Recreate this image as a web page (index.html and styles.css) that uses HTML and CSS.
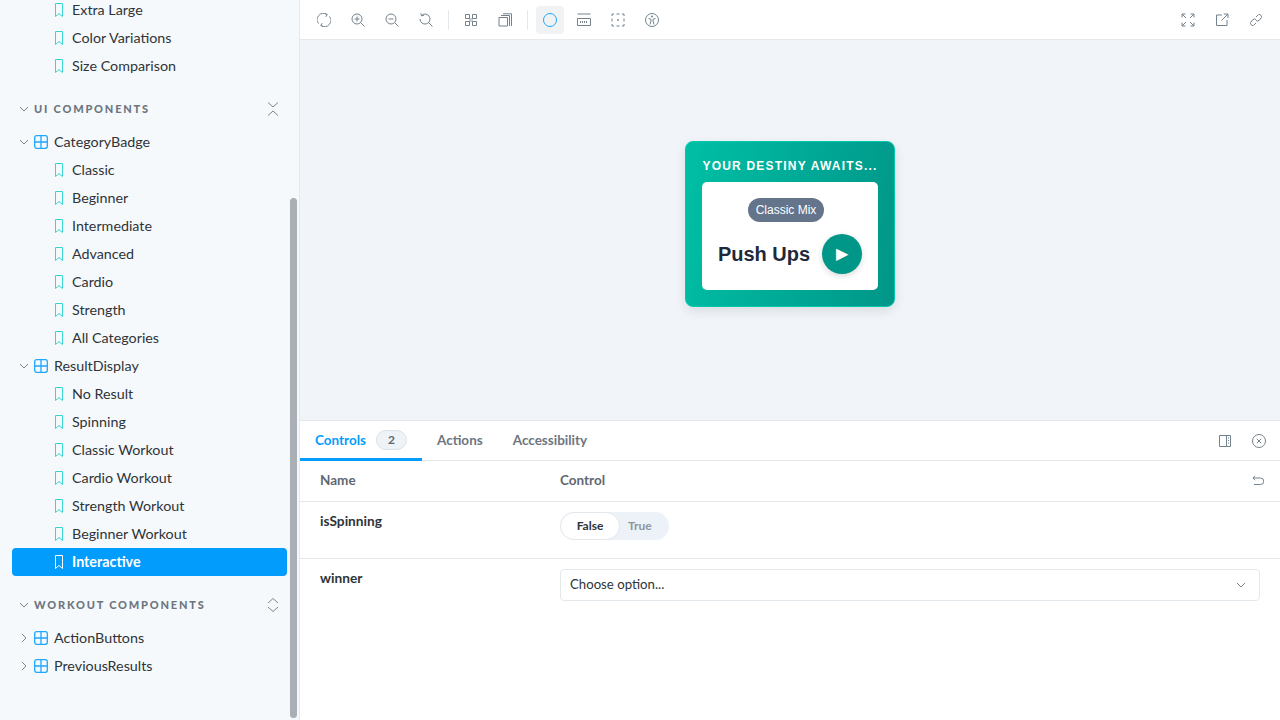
FILE: index.html
```html
<!DOCTYPE html>
<html lang="en">
<head>
  <meta charset="UTF-8" />
  <title>Storybook</title>
  <link rel="stylesheet" href="styles.css">
</head>
<body>
  <svg class="defs" width="0" height="0">
    <symbol id="bookmark" viewBox="0 0 14 14"><path d="M3.500 .5h7v13l-3.500-3-3.500 3z" fill="none" stroke="currentColor"/></symbol>
    <symbol id="grid" viewBox="0 0 14 14"><rect x=".7" y=".7" width="12.600" height="12.600" rx="2" fill="none" stroke="currentColor" stroke-width="1.300"/><path d="M7 1v12M1 7h12" stroke="currentColor" stroke-width="1.300"/></symbol>
    <symbol id="down" viewBox="0 0 10 10"><path d="M1 3l4 4 4-4" fill="none" stroke="currentColor"/></symbol>
    <symbol id="right" viewBox="0 0 10 10"><path d="M3 1l4 4-4 4" fill="none" stroke="currentColor"/></symbol>
    <symbol id="collapse" viewBox="0 0 14 14"><path d="M2 .5l5 4.500 5-4.500M2 13.500l5-4.500 5 4.500" fill="none" stroke="currentColor"/></symbol>
    <symbol id="expand" viewBox="0 0 14 14"><path d="M2 5l5-4.500 5 4.500M2 9l5 4.500 5-4.500" fill="none" stroke="currentColor"/></symbol>
  </svg>

  <div class="app">
    <aside class="sidebar">
      <div class="tree">
        <div class="row story"><svg class="ic-book"><use href="#bookmark"/></svg>Extra Large</div>
        <div class="row story"><svg class="ic-book"><use href="#bookmark"/></svg>Color Variations</div>
        <div class="row story"><svg class="ic-book"><use href="#bookmark"/></svg>Size Comparison</div>

        <div class="section">
          <svg class="ic-arrow"><use href="#down"/></svg>
          <span class="section-name">UI COMPONENTS</span>
          <svg class="ic-toggle"><use href="#collapse"/></svg>
        </div>
        <div class="row comp"><svg class="ic-arrow"><use href="#down"/></svg><svg class="ic-grid"><use href="#grid"/></svg>CategoryBadge</div>
        <div class="row story"><svg class="ic-book"><use href="#bookmark"/></svg>Classic</div>
        <div class="row story"><svg class="ic-book"><use href="#bookmark"/></svg>Beginner</div>
        <div class="row story"><svg class="ic-book"><use href="#bookmark"/></svg>Intermediate</div>
        <div class="row story"><svg class="ic-book"><use href="#bookmark"/></svg>Advanced</div>
        <div class="row story"><svg class="ic-book"><use href="#bookmark"/></svg>Cardio</div>
        <div class="row story"><svg class="ic-book"><use href="#bookmark"/></svg>Strength</div>
        <div class="row story"><svg class="ic-book"><use href="#bookmark"/></svg>All Categories</div>
        <div class="row comp"><svg class="ic-arrow"><use href="#down"/></svg><svg class="ic-grid"><use href="#grid"/></svg>ResultDisplay</div>
        <div class="row story"><svg class="ic-book"><use href="#bookmark"/></svg>No Result</div>
        <div class="row story"><svg class="ic-book"><use href="#bookmark"/></svg>Spinning</div>
        <div class="row story"><svg class="ic-book"><use href="#bookmark"/></svg>Classic Workout</div>
        <div class="row story"><svg class="ic-book"><use href="#bookmark"/></svg>Cardio Workout</div>
        <div class="row story"><svg class="ic-book"><use href="#bookmark"/></svg>Strength Workout</div>
        <div class="row story"><svg class="ic-book"><use href="#bookmark"/></svg>Beginner Workout</div>
        <div class="row story selected"><svg class="ic-book"><use href="#bookmark"/></svg>Interactive</div>

        <div class="section">
          <svg class="ic-arrow"><use href="#down"/></svg>
          <span class="section-name">WORKOUT COMPONENTS</span>
          <svg class="ic-toggle"><use href="#expand"/></svg>
        </div>
        <div class="row comp"><svg class="ic-arrow"><use href="#right"/></svg><svg class="ic-grid"><use href="#grid"/></svg>ActionButtons</div>
        <div class="row comp"><svg class="ic-arrow"><use href="#right"/></svg><svg class="ic-grid"><use href="#grid"/></svg>PreviousResults</div>
      </div>
      <div class="scrollbar"></div>
    </aside>

    <main class="main">
      <div class="toolbar">
        <div class="tool"><svg viewBox="0 0 14 14"><path d="M1.500 10.500A6.200 6.200 0 0 1 9.500 1.300M12.500 3.500A6.200 6.200 0 0 1 4.500 12.700M7.800 .3l2.500 1.200-1.500 2.300M6.200 13.700l-2.500-1.200 1.500-2.300" fill="none" stroke="currentColor"/></svg></div>
        <div class="tool"><svg viewBox="0 0 14 14"><circle cx="6" cy="6" r="5" fill="none" stroke="currentColor"/><path d="M9.500 9.500l4 4M3.500 6h5M6 3.500v5" fill="none" stroke="currentColor"/></svg></div>
        <div class="tool"><svg viewBox="0 0 14 14"><circle cx="6" cy="6" r="5" fill="none" stroke="currentColor"/><path d="M9.500 9.500l4 4M3.500 6h5" fill="none" stroke="currentColor"/></svg></div>
        <div class="tool"><svg viewBox="0 0 14 14"><path d="M2.500 2.500A5 5 0 1 1 1 6M9.500 9.500l4 4M1.800 .3l.7 2.500 2.500-.5" fill="none" stroke="currentColor"/></svg></div>
        <span class="divider"></span>
        <div class="tool"><svg viewBox="0 0 14 14"><path d="M1.500 1.500h4v4h-4zM8.500 1.500h4v4h-4zM1.500 8.500h4v4h-4zM8.500 8.500h4v4h-4z" fill="none" stroke="currentColor"/><rect x="5" y="5" width="4" height="4" fill="currentColor" opacity=".4"/></svg></div>
        <div class="tool"><svg viewBox="0 0 14 14"><path d="M1 4.500h8.500v8.500H1zM3 2.500h8.500v10.500M5 .8h8.500v12.200" fill="none" stroke="currentColor"/></svg></div>
        <span class="divider"></span>
        <div class="tool active"><svg viewBox="0 0 14 14"><circle cx="7" cy="7" r="6.500" fill="none" stroke="currentColor"/></svg></div>
        <div class="tool"><svg viewBox="0 0 14 14"><path d="M.5 1h13M.5 5.500h13v7H.5zM3.500 10V8M5.500 10V8M7.500 10V8M9.500 10V8" fill="none" stroke="currentColor"/></svg></div>
        <div class="tool"><svg viewBox="0 0 14 14"><path d="M1 3V1h2M5.500 1h3M11 1h2v2M13 5.500v3M13 11v2h-2M8.500 13h-3M3 13H1v-2M1 8.500v-3" fill="none" stroke="currentColor"/><circle cx="7" cy="7" r=".9" fill="currentColor"/></svg></div>
        <div class="tool"><svg viewBox="0 0 14 14"><circle cx="7" cy="7" r="6.500" fill="none" stroke="currentColor"/><circle cx="7" cy="3.500" r="1" fill="currentColor"/><path d="M3.500 5.500L6 6.300V8L5 11.500M10.500 5.500L8 6.300V8l1 3.500" fill="none" stroke="currentColor"/></svg></div>
        <div class="spacer"></div>
        <div class="tool"><svg viewBox="0 0 14 14"><path d="M1 1l4 4M13 1L9 5M1 13l4-4M13 13L9 9M1 4.500V1h3.500M9.500 1H13v3.500M1 9.500V13h3.500M9.500 13H13V9.500" fill="none" stroke="currentColor"/></svg></div>
        <div class="tool"><svg viewBox="0 0 14 14"><path d="M7 2H1.500v10.500H12V7M6.500 7.500L13 1M8.800 1H13v4.200" fill="none" stroke="currentColor"/></svg></div>
        <div class="tool"><svg viewBox="0 0 14 14"><path d="M7 4l2.500-2.500a2.500 2.500 0 0 1 3 3L10 7.500a2.500 2.500 0 0 1-3 0M7 10l-2.500 2.500a2.500 2.500 0 0 1-3-3L4 6.500a2.500 2.500 0 0 1 3 0" fill="none" stroke="currentColor"/></svg></div>
      </div>

      <div class="canvas">
        <div class="card">
          <h2 class="card-title">YOUR DESTINY AWAITS...</h2>
          <div class="card-body">
            <span class="badge">Classic Mix</span>
            <div class="result">
              <span class="exercise">Push Ups</span>
              <span class="play">▶</span>
            </div>
          </div>
        </div>
      </div>

      <section class="panel">
        <div class="tabs">
          <div class="tab current">Controls <span class="count">2</span></div>
          <div class="tab">Actions</div>
          <div class="tab">Accessibility</div>
          <div class="spacer"></div>
          <div class="tool small"><svg viewBox="0 0 14 14"><path d="M1.500 1.500h11v11h-11zM8.500 1.500v11" fill="none" stroke="currentColor"/><path d="M10.500 3.500v1M10.500 6v1M10.500 8.500v1" stroke="currentColor"/></svg></div>
          <div class="tool small"><svg viewBox="0 0 14 14"><circle cx="7" cy="7" r="6.500" fill="none" stroke="currentColor"/><path d="M4.800 4.800l4.400 4.400M9.200 4.800l-4.400 4.400" stroke="currentColor"/></svg></div>
        </div>

        <div class="args-head">
          <span class="col-name">Name</span>
          <span class="col-control">Control</span>
          <svg class="undo" viewBox="0 0 12 12"><path d="M1 3h7.500a3 3 0 0 1 0 6.500H2M3 .8L1 3l2 2.200" fill="none" stroke="currentColor"/></svg>
        </div>

        <div class="arg">
          <span class="col-name arg-name">isSpinning</span>
          <div class="switch"><span class="opt on">False</span><span class="opt">True</span></div>
        </div>

        <div class="arg last">
          <span class="col-name arg-name">winner</span>
          <div class="select">Choose option...
            <svg viewBox="0 0 10 10"><use href="#down"/></svg>
          </div>
        </div>
      </section>
    </main>
  </div>
</body>
</html>
```

FILE: styles.css
```css
* {
  margin: 0;
  padding: 0;
  box-sizing: border-box;
}

html, body {
  height: 100%;
  overflow: hidden;
}

body {
  font-family: Lato, "Noto Sans", sans-serif;
  font-size: 14px;
  color: #2e3438;
  background: #fff;
}

.defs {
  position: absolute;
}

.app {
  display: flex;
  height: 720px;
}

/* Sidebar */
.sidebar {
  position: relative;
  width: 300px;
  flex: none;
  background: #f6f9fc;
  border-right: 1px solid #e3e8ec;
  overflow: hidden;
}

.tree {
  margin-top: -4px;
  padding: 0 12px;
}

.row {
  display: flex;
  align-items: center;
  width: 275px;
  height: 28px;
  padding-bottom: 2px;
  font-size: 14.3px;
  color: #2e3438;
  border-radius: 4px;
}

.row svg {
  margin-top: 2px;
}

.row.story {
  padding-left: 40px;
}

.row.comp {
  padding-left: 7px;
}

.row.selected {
  background: #029cfd;
  color: #fff;
  font-weight: 700;
}

.ic-book {
  width: 14px;
  height: 14px;
  margin-right: 6px;
  color: #37d5d3;
}

.selected .ic-book {
  color: #fff;
}

.ic-grid {
  width: 14px;
  height: 14px;
  margin-right: 6px;
  color: #1ea7fd;
}

.ic-arrow {
  width: 10px;
  height: 10px;
  margin-right: 5px;
  color: #7d858c;
  flex: none;
}

.section {
  display: flex;
  align-items: center;
  height: 20px;
  margin-top: 19px;
  margin-bottom: 9px;
  padding-left: 7px;
  width: 275px;
}

.section-name {
  font-size: 11px;
  font-weight: 900;
  letter-spacing: 1.8px;
  color: #6d7680;
  flex: 1;
  margin-bottom: 2px;
}

.ic-toggle {
  width: 14px;
  height: 14px;
  color: #7d858c;
  margin-right: 7px;
}

.scrollbar {
  position: absolute;
  left: 290px;
  top: 198px;
  width: 7px;
  height: 520px;
  border-radius: 4px;
  background: #a9afb4;
}

/* Main */
.main {
  flex: 1;
  min-width: 0;
  display: flex;
  flex-direction: column;
}

.toolbar {
  display: flex;
  align-items: center;
  height: 40px;
  flex: none;
  padding: 0 10px;
  gap: 6px;
  border-bottom: 1px solid #e6e9ec;
  background: #fff;
}

.tool {
  width: 28px;
  height: 28px;
  display: flex;
  align-items: center;
  justify-content: center;
  color: #73828c;
  border-radius: 4px;
  flex: none;
}

.tool svg {
  width: 14px;
  height: 14px;
}

.tool.active {
  background: #f0f2f4;
  color: #1ea7fd;
}

.divider {
  width: 1px;
  height: 20px;
  background: #e3e8ec;
  margin: 0 2px;
  flex: none;
}

.spacer {
  flex: 1;
}

.canvas {
  flex: 1;
  display: flex;
  align-items: center;
  justify-content: center;
  background: #f1f4f9;
}

.card {
  width: 210px;
  height: 166px;
  margin-top: -12px;
  padding: 17px 16px 16px;
  border-radius: 8px;
  border: 1px solid #00c9ae;
  background: linear-gradient(100deg, #00bfa5, #009688);
  box-shadow: 0 4px 12px rgba(0, 0, 0, 0.1);
  font-family: "Liberation Sans", Arial, sans-serif;
}

.card-title {
  font-size: 12px;
  line-height: 14px;
  font-weight: 700;
  letter-spacing: 1.2px;
  text-align: center;
  color: #fff;
  white-space: nowrap;
}

.card-body {
  margin-top: 9px;
  height: 108px;
  background: #fff;
  border-radius: 5px;
  display: flex;
  flex-direction: column;
  align-items: center;
  padding-top: 16px;
}

.badge {
  height: 24px;
  line-height: 24px;
  padding: 0 8px;
  border-radius: 12px;
  background: #64748b;
  color: #fff;
  font-size: 12px;
  margin-right: 8px;
}

.result {
  display: flex;
  align-items: center;
  gap: 12px;
  margin-top: 12px;
}

.exercise {
  font-size: 20px;
  font-weight: 700;
  color: #1e293b;
}

.play {
  width: 40px;
  height: 40px;
  padding-bottom: 2px;
  border-radius: 50%;
  background: #009688;
  color: #fff;
  font-size: 16px;
  display: flex;
  align-items: center;
  justify-content: center;
  box-shadow: 0 2px 6px rgba(0, 0, 0, 0.15);
}

/* Addon panel */
.panel {
  height: 300px;
  flex: none;
  background: #fff;
  border-top: 1px solid #e3e8ec;
}

.tabs {
  display: flex;
  align-items: center;
  height: 40px;
  border-bottom: 1px solid #e3e8ec;
  padding-right: 7px;
  gap: 6px;
}

.tab {
  height: 40px;
  display: flex;
  align-items: center;
  padding: 0 15px 2px;
  font-size: 13.5px;
  font-weight: 700;
  color: #6d7680;
  margin-right: -6px;
}

.tab.current {
  color: #029cfd;
  box-shadow: inset 0 -3px 0 #029cfd;
}

.count {
  display: inline-block;
  margin-left: 10px;
  width: 31px;
  height: 20px;
  line-height: 18px;
  text-align: center;
  font-size: 12px;
  color: #5c6870;
  background: #eef3f8;
  border: 1px solid #dde3e8;
  border-radius: 10px;
}

.tool.small {
  width: 28px;
}

.args-head,
.arg {
  display: flex;
  padding: 0 20px;
  border-bottom: 1px solid #e3e8ec;
}

.args-head {
  height: 41px;
  align-items: center;
  padding-bottom: 2px;
  font-size: 13.5px;
  font-weight: 700;
  color: #5f6870;
}

.col-name {
  width: 240px;
  flex: none;
}

.col-control {
  flex: 1;
}

.undo {
  width: 12px;
  height: 12px;
  margin-top: 2px;
  margin-right: -4px;
  color: #73828c;
}

.arg {
  height: 57px;
  padding-top: 9px;
}

.arg.last {
  border-bottom: none;
}

.arg-name {
  font-size: 13.7px;
  font-weight: 700;
  color: #2e3438;
  line-height: 20px;
}

.switch {
  display: flex;
  height: 28px;
  width: 109px;
  margin-top: 1px;
  background: #ecf2f8;
  border-radius: 14px;
}

.opt {
  width: 38px;
  margin-left: 8px;
  line-height: 28px;
  font-size: 12px;
  font-weight: 700;
  color: #8d949b;
}

.opt.on {
  width: 60px;
  margin-left: 0;
  text-align: center;
  background: #fff;
  color: #2e3438;
  border: 1px solid #e3e8ec;
  border-radius: 14px;
  line-height: 26px;
}

.select {
  flex: 1;
  height: 32px;
  margin-top: 1px;
  display: flex;
  align-items: center;
  justify-content: space-between;
  padding: 0 13px 2px 9px;
  font-size: 13.2px;
  color: #2e3438;
  border: 1px solid #e3e8ec;
  border-radius: 4px;
}

.select svg {
  width: 10px;
  height: 10px;
  margin-top: 2px;
  color: #7d858c;
}
```
